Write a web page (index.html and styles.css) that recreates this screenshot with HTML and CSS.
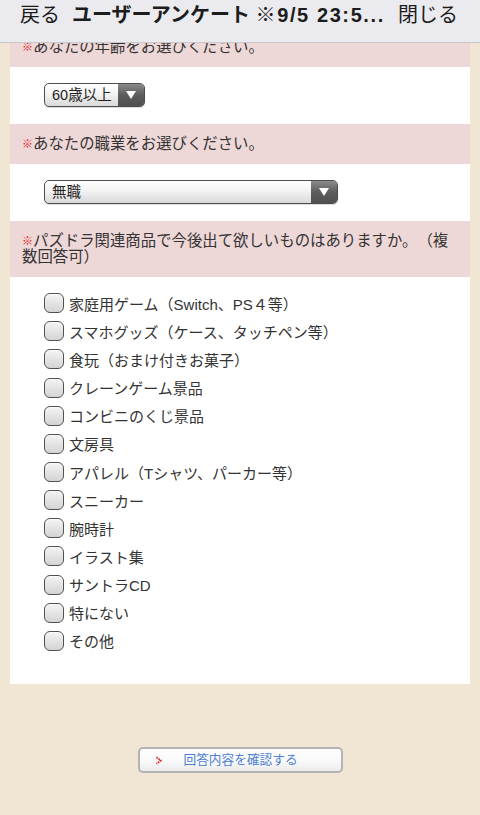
FILE: index.html
```html
<!DOCTYPE html>
<html lang="ja">
<head>
<meta charset="utf-8">
<title>ユーザーアンケート</title>
<link rel="stylesheet" href="styles.css">
</head>
<body>
<header class="navbar">
  <span class="nav-btn">戻る</span>
  <span class="nav-title">ユーザーアンケート <span class="nav-title-latin">※9/5 23:5...</span></span>
  <span class="nav-btn">閉じる</span>
</header>
<main class="page">
  <form class="card">
    <div class="q-head"><span class="req">※</span>あなたの年齢をお選びください。</div>
    <div class="q-body">
      <div class="select select-short">
        <span class="select-value">60歳以上</span>
        <span class="select-arrow"><svg width="10" height="8" viewBox="0 0 10 8"><path d="M0 0H10L5 8Z" fill="#fff"/></svg></span>
      </div>
    </div>
    <div class="q-head"><span class="req">※</span>あなたの職業をお選びください。</div>
    <div class="q-body">
      <div class="select select-long">
        <span class="select-value">無職</span>
        <span class="select-arrow"><svg width="10" height="8" viewBox="0 0 10 8"><path d="M0 0H10L5 8Z" fill="#fff"/></svg></span>
      </div>
    </div>
    <div class="q-head"><span class="req">※</span>パズドラ関連商品で今後出て欲しいものはありますか。（複数回答可）</div>
    <div class="q-body q-checks">
      <label class="check"><span class="box"></span>家庭用ゲーム（Switch、PS４等）</label>
      <label class="check"><span class="box"></span>スマホグッズ（ケース、タッチペン等）</label>
      <label class="check"><span class="box"></span>食玩（おまけ付きお菓子）</label>
      <label class="check"><span class="box"></span>クレーンゲーム景品</label>
      <label class="check"><span class="box"></span>コンビニのくじ景品</label>
      <label class="check"><span class="box"></span>文房具</label>
      <label class="check"><span class="box"></span>アパレル（Tシャツ、パーカー等）</label>
      <label class="check"><span class="box"></span>スニーカー</label>
      <label class="check"><span class="box"></span>腕時計</label>
      <label class="check"><span class="box"></span>イラスト集</label>
      <label class="check"><span class="box"></span>サントラCD</label>
      <label class="check"><span class="box"></span>特にない</label>
      <label class="check"><span class="box"></span>その他</label>
    </div>
  </form>
  <div class="actions">
    <div class="confirm-btn">
      <svg class="confirm-icon" width="8" height="9" viewBox="0 0 8 9"><path d="M1.5 1.2L5.8 4.5L1.5 7.8" fill="none" stroke="#d8302a" stroke-width="2" stroke-linejoin="round" stroke-dasharray="1.6 0.9"/></svg>
      <span class="confirm-text">回答内容を確認する</span>
    </div>
  </div>
</main>
</body>
</html>
```

FILE: styles.css
```css
* { box-sizing: border-box; }
html, body {
  margin: 0;
  padding: 0;
}
body {
  background: #f1e5d3;
  font-family: "Liberation Sans", "Noto Sans CJK JP", sans-serif;
  color: #333;
  width: 480px;
  height: 815px;
  overflow: hidden;
  text-spacing-trim: space-all;
}
.navbar {
  position: fixed;
  top: 0;
  left: 0;
  right: 0;
  height: 43px;
  background: #ebebef;
  border-bottom: 1px solid #c9c9cc;
  display: flex;
  align-items: flex-start;
  padding: 2px 22px 0 20px;
  gap: 12px;
  font-size: 20px;
  line-height: 26px;
  color: #1c1c1c;
  z-index: 10;
}
.nav-btn { flex: none; }
.nav-title {
  flex: 1;
  font-weight: bold;
  white-space: nowrap;
}
.nav-title-latin {
  letter-spacing: 1.6px;
}
.page {
  padding-top: 27px;
}
.card {
  margin: 0 10px;
  background: #fff;
  display: flex;
  flex-direction: column;
}
.q-head {
  background: #eed7d7;
  font-size: 15.4px;
  line-height: 16px;
  padding: 12px;
  color: #333;
}
.req {
  color: #e0282a;
  font-size: 11px;
  line-height: 0;
  vertical-align: 1px;
}
.q-body {
  padding: 16px 34px 17px;
}
.select {
  height: 24px;
  border: 1px solid #4d4d4d;
  border-radius: 5px;
  display: flex;
  overflow: hidden;
  background: linear-gradient(#ffffff, #f3f3f3 45%, #d9d9d9);
  box-shadow: 0 1px 1px rgba(0,0,0,0.15);
}
.select-short { width: 101px; }
.select-long { width: 294px; }
.select-value {
  flex: 1;
  font-size: 14.5px;
  line-height: 22px;
  padding-left: 7px;
  color: #222;
}
.select-arrow {
  width: 26px;
  flex: none;
  background: linear-gradient(#8a8a8a, #5d5d5d 50%, #4f4f4f);
  display: flex;
  align-items: center;
  justify-content: center;
}
.q-checks {
  padding: 12px 34px 29px;
  display: flex;
  flex-direction: column;
}
.check {
  height: 28.17px;
  display: flex;
  align-items: center;
  gap: 5px;
  font-size: 15px;
  color: #333;
}
.box {
  width: 20px;
  height: 20px;
  flex: none;
  border: 1.5px solid #505050;
  border-radius: 6px;
  background: linear-gradient(#f4f4f4, #d4d4d4);
  box-shadow: inset 0 1px 1px rgba(255,255,255,0.8);
}
.actions {
  display: flex;
  justify-content: center;
  padding-top: 63px;
}
.confirm-btn {
  width: 205px;
  height: 26px;
  border: 2px solid #b3b3b3;
  border-radius: 5px;
  background: linear-gradient(#ffffff, #fafafa 50%, #ececec);
  display: flex;
  align-items: center;
}
.confirm-icon {
  margin-left: 15px;
  flex: none;
}
.confirm-text {
  margin-left: 21px;
  font-size: 12.7px;
  color: #4c7fd2;
  line-height: 20px;
}
```
